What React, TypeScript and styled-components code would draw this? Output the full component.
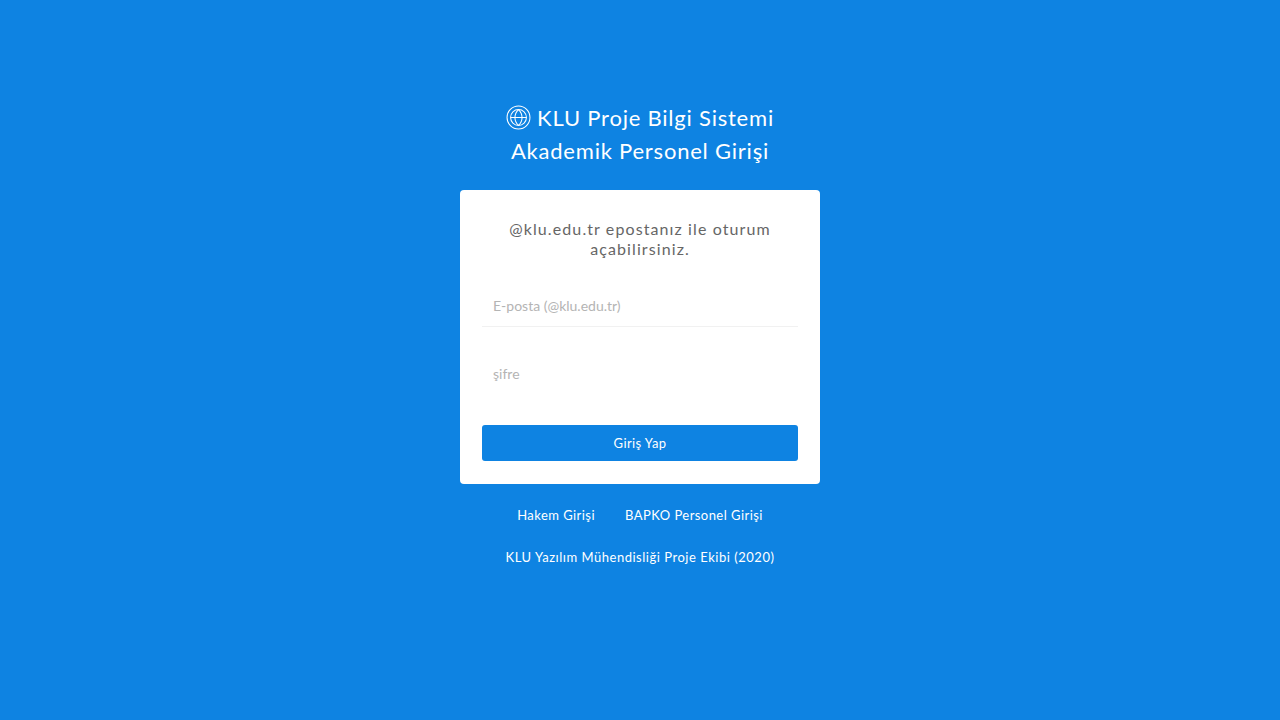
import React from "react";
import styled, { createGlobalStyle } from "styled-components";

const Global = createGlobalStyle`
  html, body { margin: 0; padding: 0; height: 100%; background: #0e83e2; }
  body { font-family: Lato, "Open Sans", "Liberation Sans", sans-serif; }
  * { box-sizing: border-box; }
`;

const Page = styled.main`
  width: 1280px;
  height: 720px;
  overflow: hidden;
  background: #0e83e2;
  display: flex;
  flex-direction: column;
  align-items: center;
  padding-top: 101px;
`;

const Title = styled.h1`
  margin: 0 0 23px;
  color: #fff;
  font-size: 22px;
  font-weight: 400;
  line-height: 33px;
  letter-spacing: 0.78px;
  text-align: center;
`;

const TitleLine = styled.span`
  display: flex;
  align-items: center;
  justify-content: center;
  gap: 6px;
`;

const Logo = styled.svg`
  width: 25px;
  height: 25px;
  flex: none;
`;

const Card = styled.form`
  width: 360px;
  height: 294px;
  background: #fff;
  border-radius: 4px;
  padding: 29px 22px 0;
  display: flex;
  flex-direction: column;
`;

const Lead = styled.p`
  margin: 0 auto 26px;
  width: 300px;
  color: #666;
  font-size: 16px;
  line-height: 20px;
  letter-spacing: 1.1px;
  text-align: center;
`;

const Field = styled.input<{ $last?: boolean }>`
  display: block;
  width: 100%;
  height: 42px;
  margin-bottom: ${(p) => (p.$last ? "30px" : "26px")};
  padding: 0 11px;
  border: 0;
  border-bottom: 1px solid ${(p) => (p.$last ? "#fff" : "#f1f1f1")};
  outline: 0;
  background: #fff;
  color: #555;
  font: 400 14px Lato, "Open Sans", sans-serif;
  &::placeholder { color: #b4b4b4; opacity: 1; }
`;

const Submit = styled.button`
  width: 100%;
  height: 36px;
  border: 0;
  border-radius: 3px;
  background: #0e83e2;
  color: #fff;
  font: 400 13px Lato, "Open Sans", sans-serif;
  letter-spacing: 0.4px;
`;

const Links = styled.nav`
  display: flex;
  justify-content: center;
  gap: 30px;
  margin-top: 22px;
`;

const FooterLink = styled.a`
  color: #fff;
  font-size: 13px;
  line-height: 18px;
  letter-spacing: 0.45px;
  text-decoration: none;
`;

const Credit = styled.p`
  margin: 24px 0 0;
  color: #fff;
  font-size: 13px;
  line-height: 18px;
  letter-spacing: 0.52px;
  text-align: center;
`;

export default function App() {
  return (
    <Page>
      <Global />
      <Title>
        <TitleLine>
          <Logo viewBox="0 0 24 24" fill="none" stroke="#fff" strokeWidth="1">
            <circle cx="12" cy="12" r="11" />
            <circle cx="12" cy="12" r="7.6" />
            <path d="M4.4 12h15.2M12 4.4c2.4 2.2 3.4 4.8 3.4 7.6s-1 5.4-3.4 7.6c-2.4-2.2-3.4-4.8-3.4-7.6s1-5.4 3.4-7.6z" />
          </Logo>
          KLU Proje Bilgi Sistemi
        </TitleLine>
        <TitleLine>Akademik Personel Girişi</TitleLine>
      </Title>
      <Card>
        <Lead>@klu.edu.tr epostanız ile oturum açabilirsiniz.</Lead>
        <Field type="email" placeholder="E-posta (@klu.edu.tr)" />
        <Field $last type="password" placeholder="şifre" />
        <Submit type="button">Giriş Yap</Submit>
      </Card>
      <Links>
        <FooterLink href="#">Hakem Girişi</FooterLink>
        <FooterLink href="#">BAPKO Personel Girişi</FooterLink>
      </Links>
      <Credit>KLU Yazılım Mühendisliği Proje Ekibi (2020)</Credit>
    </Page>
  );
}
